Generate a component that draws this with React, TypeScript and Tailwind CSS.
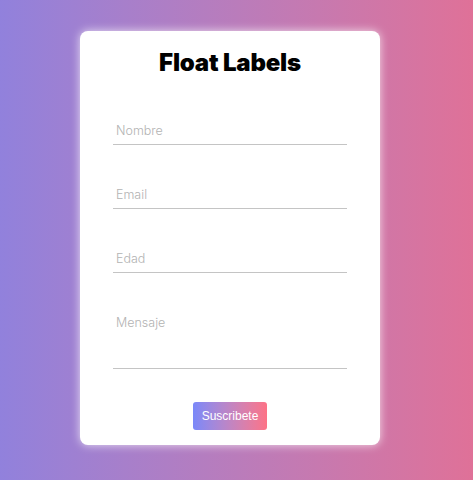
const FIELDS = ["Nombre", "Email", "Edad"];

function Field({ label }: { label: string }) {
  return (
    <div className="h-[29px] border-b border-[#c4c4c4] px-[3px] pt-[7px] text-[12.5px] font-light leading-[16px] text-[#b3b3b3]">
      {label}
    </div>
  );
}

export default function App() {
  return (
    <div
      className="flex h-[480px] w-full flex-col items-start bg-gradient-to-r from-[#9181dc] to-[#df7198] pl-[80px] pt-[31px]"
      style={{ fontFamily: "Inter, 'Open Sans', sans-serif" }}
    >
      <div className="flex h-[414px] w-[300px] flex-col rounded-[8px] bg-white px-[33px] pt-[16px] shadow-[0_0_10px_rgba(255,255,255,0.75)]">
        <h1 className="text-center text-[24px] font-black leading-[32px] tracking-[-0.2px] text-black">
          Float Labels
        </h1>

        <div className="mt-[37px] flex flex-col gap-[35px]">
          {FIELDS.map((f) => (
            <Field key={f} label={f} />
          ))}
          <div className="h-[61px] border-b border-[#c4c4c4] px-[3px] pt-[7px] text-[12.5px] font-light leading-[16px] text-[#b3b3b3]">
            Mensaje
          </div>
        </div>

        <div className="mt-[33px] flex justify-center">
          <button
            className="h-[28px] rounded-[3px] bg-gradient-to-r from-[#7a88f9] to-[#fd7286] px-[9px] text-[12px] text-white"
            style={{ fontFamily: "'Liberation Sans', Arial, sans-serif" }}
          >
            Suscribete
          </button>
        </div>
      </div>
    </div>
  );
}
